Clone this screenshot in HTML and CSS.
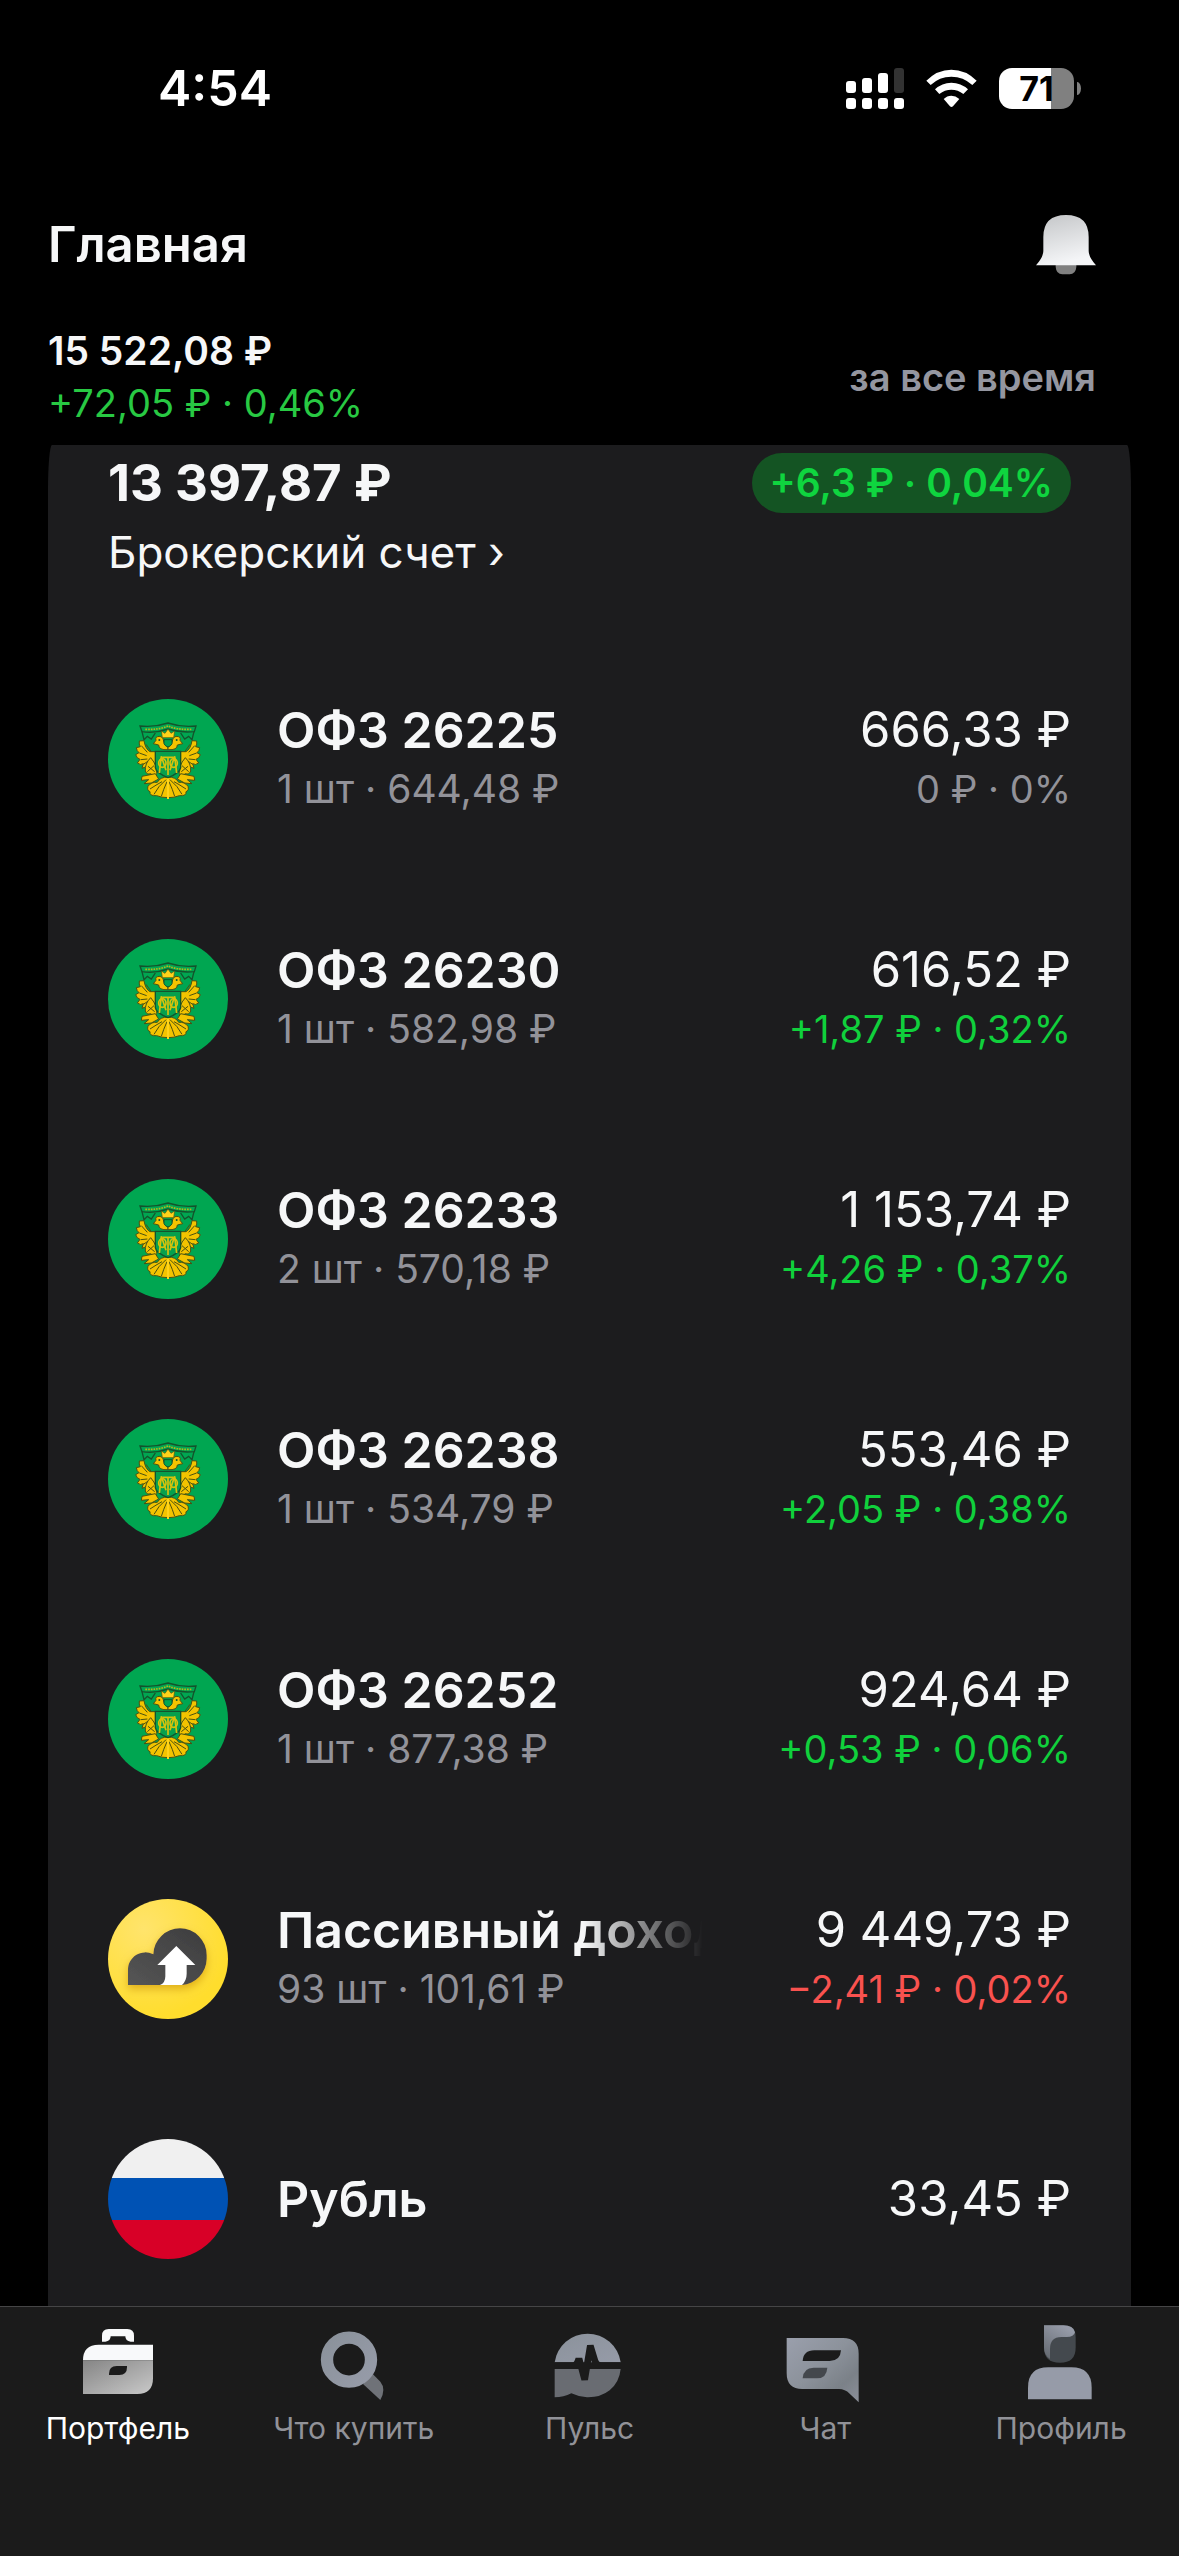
FILE: index.html
```html
<!DOCTYPE html>
<html lang="ru">
<head>
<meta charset="utf-8">
<meta name="viewport" content="width=device-width, initial-scale=1">
<title>Портфель</title>
<link rel="stylesheet" href="styles.css">
</head>
<body>
<svg class="defs" aria-hidden="true">
  <defs>
    <linearGradient id="bell" x1="0" y1="0" x2="0.3" y2="1"><stop offset="0" stop-color="#c3c5c7"/><stop offset="1" stop-color="#f4f5f7"/></linearGradient>
    <linearGradient id="case" x1="0" y1="0" x2="1" y2="1"><stop offset="0" stop-color="#858585"/><stop offset="1" stop-color="#c9c9c9"/></linearGradient>
    <linearGradient id="steel" x1="0" y1="0" x2="1" y2="1"><stop offset="0" stop-color="#8b929b"/><stop offset="1" stop-color="#969ba8"/></linearGradient>
    <linearGradient id="chat" x1="0" y1="0" x2="1" y2="1"><stop offset="0" stop-color="#9a9fac"/><stop offset="0.45" stop-color="#8c929b"/><stop offset="0.75" stop-color="#7b8188"/><stop offset="1" stop-color="#8b8f99"/></linearGradient>
    <linearGradient id="hair" x1="0" y1="1" x2="0.6" y2="0"><stop offset="0" stop-color="#62676e"/><stop offset="1" stop-color="#969ba8"/></linearGradient>
    <linearGradient id="cloud" x1="1" y1="0" x2="0" y2="1"><stop offset="0" stop-color="#3d3d3e"/><stop offset="1" stop-color="#555"/></linearGradient>
    <radialGradient id="sun" cx="0.3" cy="0.25" r="0.75"><stop offset="0" stop-color="#ffe46c"/><stop offset="1" stop-color="#ffdd2d"/></radialGradient>
    <filter id="shade" x="-30%" y="-30%" width="160%" height="180%"><feDropShadow dx="0" dy="12" stdDeviation="12" flood-color="#c98f00" flood-opacity="0.6"/></filter>

    <symbol id="emblem" viewBox="54 56 360 360">
      <circle cx="234" cy="236" r="180" fill="#00a651"/>
      <g stroke="#14532c" stroke-width="4" fill="none">
        <path d="M150 137Q192 142 234 128Q276 142 318 137L313 154Q270 158 234 146Q196 160 156 154Z"/>
        <path d="M156 154L162 178L172 168L184 176L196 158M312 154L306 178L296 168L284 176L272 158"/>
      </g>
      <path d="M166 147Q205 149 234 137Q262 149 304 147" stroke="#b5b51c" stroke-width="5" stroke-dasharray="5 3" fill="none"/>
      <g id="emblem-half">
        <path d="M234 214H180Q166 206 162 181L148 182Q146 192 151 199L139 202Q140 212 147 217L137 223Q140 234 150 237L142 248Q152 256 160 250L156 264Q168 262 178 250L200 252V214Z" fill="#f3c300" stroke="#4a5212" stroke-width="3"/>
        <path d="M154 196L172 216M148 218L170 226M152 238L172 236M160 252L178 240M168 192L184 214" stroke="#4a5212" stroke-width="3" fill="none"/>
        <path d="M234 208Q206 210 206 194L190 190L198 180Q194 168 210 168Q221 170 221 182Q222 196 234 200Z" fill="#f3c300" stroke="#4a5212" stroke-width="3"/>
        <circle cx="208" cy="179" r="3" fill="#14532c"/>
        <path d="M182 232Q164 250 166 272Q170 284 182 280Q194 292 200 280Q204 258 182 232Z" fill="#f3c300" stroke="#4a5212" stroke-width="3"/>
        <path d="M174 258L194 274M172 274L192 256" stroke="#4a5212" stroke-width="3"/>
        <path d="M196 280L156 288L154 300L176 298L162 310L184 308L206 296Z" fill="#f3c300" stroke="#4a5212" stroke-width="3"/>
        <path d="M234 290Q210 290 202 306Q184 304 174 318Q170 330 180 334Q178 348 200 346Q214 352 234 352Z" fill="#f3c300" stroke="#4a5212" stroke-width="3"/>
        <path d="M228 298Q204 318 192 342M231 304Q220 328 214 348M216 304Q198 314 180 326" stroke="#4a5212" stroke-width="3" fill="none"/>
      </g>
      <use href="#emblem-half" transform="matrix(-1 0 0 1 468 0)"/>
      <path d="M217 172L214 152L225 159L234 146L243 159L254 152L251 172Z" fill="#ffd21a" stroke="#4a5212" stroke-width="2"/>
      <path d="M222 178H246V190Q242 198 234 200Q226 198 222 190Z" fill="#00a651" stroke="#14532c" stroke-width="3"/>
      <path d="M196 213H272V262Q270 278 234 292Q198 278 196 262Z" fill="#06a04d" stroke="#14532c" stroke-width="4"/>
      <g stroke="#d9c20c" stroke-width="5" fill="none">
        <path d="M208 278L214 228L228 270M260 278L254 228L240 270M234 230V284M218 231H250"/>
        <ellipse cx="217" cy="248" rx="11" ry="13"/><ellipse cx="251" cy="248" rx="11" ry="13"/>
      </g>
      <path d="M234 294V356" stroke="#ffd21a" stroke-width="6"/>
    </symbol>
  </defs>
</svg>

<div class="app">
  <header class="header">
    <div class="status">
      <time class="clock">4:54</time>
      <div class="indicators">
        <svg class="signal" viewBox="78 81 174 123" fill="#fff" aria-label="Сигнал">
          <rect x="78" y="120" width="30" height="36" rx="9"/><rect x="126" y="111" width="30" height="45" rx="9"/><rect x="174" y="96" width="30" height="60" rx="9"/><rect x="222" y="81" width="30" height="75" rx="9" fill="#323232"/>
          <rect x="78" y="171" width="30" height="33" rx="9"/><rect x="126" y="171" width="30" height="33" rx="9"/><rect x="174" y="171" width="30" height="33" rx="9"/><rect x="222" y="171" width="30" height="33" rx="9"/>
        </svg>
        <svg class="wifi" viewBox="318 81 153 123" fill="#fff" aria-label="Wi-Fi">
          <path d="M319 119Q352 86 394 86Q437 86 470 119L457 132Q430 107 394 107Q358 107 332 132Z"/>
          <path d="M345 145Q366 125 394 125Q423 125 444 145L430 159Q414 146 394 146Q374 146 358 159Z"/>
          <path d="M371 174Q381 164 394 164Q407 164 418 174L399 196Q394 200 390 196Z"/>
        </svg>
        <div class="battery"><span class="battery-level">71</span></div>
      </div>
    </div>
    <div class="title-row">
      <h1 class="title">Главная</h1>
      <button class="bell" type="button" aria-label="Уведомления">
        <svg viewBox="645 524 180 180">
          <path d="M704 672H766V680Q764 702 746 702H724Q706 702 704 680Z" fill="#808080"/>
          <path d="M645 675Q667 650 667 632V590Q667 524 735 524Q803 524 803 590V632Q803 650 825 675Z" fill="url(#bell)"/>
        </svg>
      </button>
    </div>
    <div class="summary">
      <div>
        <div class="total">15 522,08 ₽</div>
        <div class="gain">+72,05 ₽ · 0,46%</div>
      </div>
      <button class="period" type="button">за все время</button>
    </div>
  </header>

  <main class="content">
    <section class="card">
      <div class="card-head">
        <h2 class="balance">13 397,87 ₽</h2>
        <span class="pill">+6,3 ₽ · 0,04%</span>
      </div>
      <a class="account" href="#account">Брокерский счет ›</a>
      <ul class="assets">
        <li class="asset">
          <svg class="logo"><use href="#emblem"/></svg>
          <div class="info"><div class="name">ОФЗ 26225</div><div class="note">1 шт · 644,48 ₽</div></div>
          <div class="worth"><div class="value">666,33 ₽</div><div class="change">0 ₽ · 0%</div></div>
        </li>
        <li class="asset">
          <svg class="logo"><use href="#emblem"/></svg>
          <div class="info"><div class="name">ОФЗ 26230</div><div class="note">1 шт · 582,98 ₽</div></div>
          <div class="worth"><div class="value">616,52 ₽</div><div class="change up">+1,87 ₽ · 0,32%</div></div>
        </li>
        <li class="asset">
          <svg class="logo"><use href="#emblem"/></svg>
          <div class="info"><div class="name">ОФЗ 26233</div><div class="note">2 шт · 570,18 ₽</div></div>
          <div class="worth"><div class="value">1 153,74 ₽</div><div class="change up">+4,26 ₽ · 0,37%</div></div>
        </li>
        <li class="asset">
          <svg class="logo"><use href="#emblem"/></svg>
          <div class="info"><div class="name">ОФЗ 26238</div><div class="note">1 шт · 534,79 ₽</div></div>
          <div class="worth"><div class="value">553,46 ₽</div><div class="change up">+2,05 ₽ · 0,38%</div></div>
        </li>
        <li class="asset">
          <svg class="logo"><use href="#emblem"/></svg>
          <div class="info"><div class="name">ОФЗ 26252</div><div class="note">1 шт · 877,38 ₽</div></div>
          <div class="worth"><div class="value">924,64 ₽</div><div class="change up">+0,53 ₽ · 0,06%</div></div>
        </li>
        <li class="asset">
          <svg class="logo" viewBox="54 56 360 360">
            <circle cx="234" cy="236" r="180" fill="url(#sun)"/>
            <path d="M114 314V270A52 52 0 0 1 190 222A80 80 0 0 1 270 144A80 80 0 0 1 350 224V236A80 80 0 0 1 276 314Z" fill="url(#cloud)" filter="url(#shade)"/>
            <path d="M259 197L316 254H290V280Q290 300 276 314H210Q226 308 226 288V254H202Z" fill="#fff"/>
          </svg>
          <div class="info"><div class="name name-fade">Пассивный доход</div><div class="note">93 шт · 101,61 ₽</div></div>
          <div class="worth"><div class="value">9 449,73 ₽</div><div class="change down">−2,41 ₽ · 0,02%</div></div>
        </li>
        <li class="asset">
          <svg class="logo flag" viewBox="0 0 120 120">
            <path d="M0 0H120V39H0Z" fill="#f0f0f0"/><path d="M0 39H120V81H0Z" fill="#0052b4"/><path d="M0 81H120V120H0Z" fill="#d80027"/>
          </svg>
          <div class="info"><div class="name">Рубль</div></div>
          <div class="worth"><div class="value">33,45 ₽</div></div>
        </li>
      </ul>
    </section>
  </main>

  <nav class="tabs">
    <a class="tab active" href="#portfolio">
      <svg class="tab-icon" viewBox="234 98 240 240">
        <path d="M306 154V136Q306 116 326 116H382Q402 116 402 136V154H392Q376 152 376 138H332Q332 152 316 154Z" fill="#f8f9fa"/>
        <path d="M249 210Q249 163 296 163H459V210Z" fill="#f8f9fa"/>
        <path d="M249 210H459V264Q459 311 412 311H249Z" fill="url(#case)"/>
        <path d="M327 254V250Q327 227 350 227H381V231Q381 254 358 254Z" fill="#1b1b1b"/>
      </svg>
      <span>Портфель</span>
    </a>
    <a class="tab" href="#buy">
      <svg class="tab-icon" viewBox="941 98 240 240">
        <path d="M1088 281L1118 252L1140 274Q1158 296 1140 329Z" fill="#6f7278"/>
        <circle cx="1046" cy="208" r="66" fill="none" stroke="url(#steel)" stroke-width="37"/>
      </svg>
      <span>Что купить</span>
    </a>
    <a class="tab" href="#pulse">
      <svg class="tab-icon" viewBox="448 98 240 240">
        <path d="M465 216A100 100 0 0 1 663 216Z" fill="url(#steel)"/>
        <path d="M465 236H663Q659 276 630 300Q602 322 562 321Q538 320 515 309Q492 321 465 321Z" fill="#696c72"/>
        <path d="M465 226H520Q530 226 535 212H540L555 268L572 166L586 212Q590 226 604 226H663" fill="none" stroke="#1b1b1b" stroke-width="20"/>
      </svg>
      <span>Пульс</span>
    </a>
    <a class="tab" href="#chat">
      <svg class="tab-icon" viewBox="-44 98 240 240">
        <path d="M-39 143H130Q177 143 177 190V336L150 310Q136 296 118 296H8Q-39 296 -39 249Z" fill="url(#chat)"/>
        <path d="M9 212Q11 180 44 180H124Q122 212 90 212Z" fill="#1b1b1b"/>
        <path d="M9 264Q11 232 42 232H83Q81 264 52 264Z" fill="#44484d"/>
      </svg>
      <span>Чат</span>
    </a>
    <a class="tab" href="#profile">
      <svg class="tab-icon" viewBox="663 98 240 240">
        <path d="M732 105H790Q827 105 827 140V172Q827 217 780 217Q732 217 732 172Z" fill="#44494e"/>
        <path d="M732 105H790Q820 105 825 126Q822 140 800 140H784Q750 140 750 176V206Q732 194 732 172Z" fill="url(#hair)"/>
        <path d="M684 327V292Q684 231 745 231H814Q875 231 875 292V327Z" fill="#969ba8"/>
      </svg>
      <span>Профиль</span>
    </a>
  </nav>
</div>
</body>
</html>
```
FILE: styles.css
```css
* {
  box-sizing: border-box;
}

body {
  margin: 0;
  background: #000;
  color: #f6f7f8;
  font-family: Inter, "Noto Sans", sans-serif;
}

h1,
h2,
ul {
  margin: 0;
  padding: 0;
}

a {
  color: inherit;
  text-decoration: none;
}

button {
  padding: 0;
  border: 0;
  background: none;
  color: inherit;
  font: inherit;
}

svg {
  display: block;
  flex: none;
}

.defs {
  position: absolute;
  width: 0;
  height: 0;
}

.app {
  display: flex;
  flex-direction: column;
  height: 100vh;
}

/* Header */

.header {
  padding: 58px 83px 15px 48px;
}

.status {
  display: flex;
  justify-content: space-between;
  align-items: center;
  padding: 0 15px 0 110px;
}

.clock {
  font-size: 50px;
  line-height: 60px;
  font-weight: 600;
  color: #fff;
}

.indicators {
  display: flex;
  align-items: center;
  gap: 22px;
}

.signal {
  width: 58px;
  height: 41px;
}

.wifi {
  width: 51px;
  height: 41px;
}

.battery {
  position: relative;
  width: 75px;
  height: 41px;
  margin-right: 7px;
  border-radius: 13px;
  background: linear-gradient(90deg, #fff 70%, #808080 70%);
  color: #000;
  font-size: 34px;
  line-height: 41px;
  font-weight: 700;
  text-align: center;
}

.battery::after {
  content: "";
  position: absolute;
  top: 14px;
  right: -7px;
  width: 4px;
  height: 13px;
  border-radius: 0 4px 4px 0 / 0 7px 7px 0;
  background: #808080;
}

.title-row {
  display: flex;
  justify-content: space-between;
  align-items: center;
  margin-top: 97px;
}

.title {
  font-size: 49px;
  line-height: 60px;
  font-weight: 600;
}

.bell svg {
  width: 60px;
  height: 60px;
}

.summary {
  display: flex;
  justify-content: space-between;
  align-items: center;
  margin-top: 49px;
  font-size: 38px;
  line-height: 53px;
}

.total {
  font-size: 39px;
  font-weight: 600;
}

.gain {
  color: #28c943;
}

.period {
  color: #9496a0;
  font-weight: 600;
}

/* Portfolio card */

.content {
  flex: 1;
  min-height: 0;
  overflow-y: auto;
  scrollbar-width: none;
  padding: 0 48px;
}

.card {
  padding: 8px 60px 0;
  border-radius: 4px 4px 0 0 / 45px 45px 0 0;
  background: #1c1c1e;
}

.card-head {
  display: flex;
  justify-content: space-between;
  align-items: center;
}

.balance {
  font-size: 51px;
  line-height: 60px;
  font-weight: 700;
}

.pill {
  padding: 0 18px;
  border-radius: 30px;
  background: #145423;
  color: #0fd53f;
  font-size: 39px;
  line-height: 60px;
  font-weight: 600;
}

.account {
  display: block;
  margin-top: 9px;
  font-size: 44px;
  line-height: 60px;
}

.assets {
  margin-top: 57px;
  list-style: none;
}

.asset {
  display: flex;
  align-items: center;
  height: 240px;
}

.logo {
  width: 120px;
  height: 120px;
}

.flag {
  border-radius: 50%;
}

.info {
  flex: 1;
  min-width: 0;
  margin-left: 49px;
}

.name,
.value {
  font-size: 50px;
  line-height: 60px;
  white-space: nowrap;
}

.name {
  overflow: hidden;
  font-weight: 600;
}

.name-fade {
  mask-image: linear-gradient(90deg, #000 calc(100% - 120px), transparent);
}

.value {
  font-size: 49px;
}

.worth {
  margin-left: 84px;
  text-align: right;
}

.note,
.change {
  color: #929299;
  font-size: 39px;
  line-height: 58px;
  white-space: nowrap;
}

.change {
  font-size: 38px;
}

.up {
  color: #10d03c;
}

.down {
  color: #f9524f;
}

/* Bottom navigation */

.tabs {
  display: grid;
  grid-template-columns: repeat(5, 1fr);
  padding: 16px 0 108px;
  border-top: 1px solid #454546;
  background: #1b1b1b;
}

.tab {
  display: flex;
  flex-direction: column;
  align-items: center;
  gap: 5px;
  color: #919298;
  font-size: 30px;
  line-height: 40px;
}

.tab.active {
  color: #fff;
}

.tab-icon {
  width: 80px;
  height: 80px;
}
```
